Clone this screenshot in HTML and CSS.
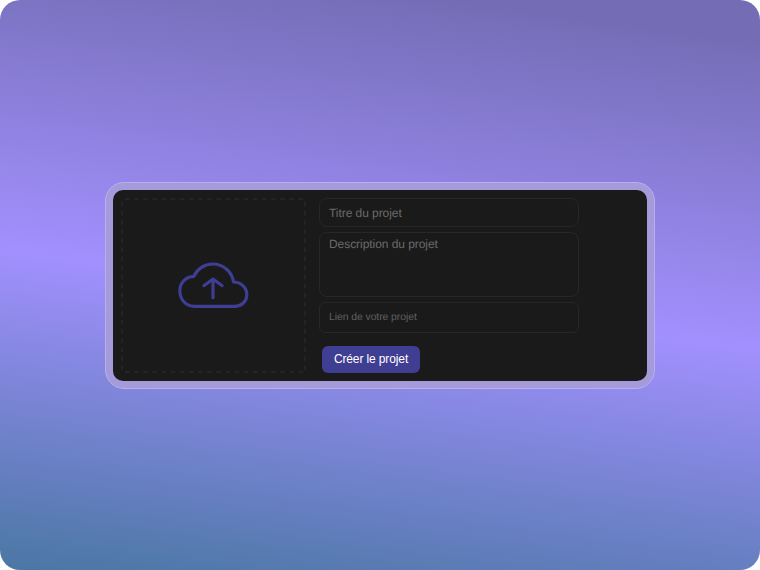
FILE: index.html
```html
<!DOCTYPE html>
<html lang="fr">
<head>
<meta charset="utf-8">
<title>Créer un projet</title>
<link rel="stylesheet" href="styles.css">
</head>
<body>
<main class="stage">
  <div class="frame">
    <form class="card">
      <div class="dropzone">
        <svg class="outline" width="185" height="175" viewBox="0 0 185 175" aria-hidden="true">
          <path d="M4 1H183M4 174H183" stroke-dasharray="4.6 4.53"/>
          <path d="M1 4V173M184 4V173" stroke-dasharray="4.6 4.48"/>
        </svg>
        <svg class="cloud" width="90" height="60" viewBox="0 0 270 180" aria-hidden="true">
          <path d="M74 154C49 154 31 133 31 108C31 83 49 65 73 64C83 42 105 27 130 27C162 27 188 51 192 81C214 81 232 98 232 119C232 139 216 154 196 154Z"/>
          <path d="M130.500 128V72M103 92L130.500 72L158 92"/>
        </svg>
      </div>
      <div class="fields">
        <div class="field title">Titre du projet</div>
        <div class="field description">Description du projet</div>
        <div class="field link">Lien de votre projet</div>
        <button class="submit" type="button">Créer le projet</button>
      </div>
    </form>
  </div>
</main>
</body>
</html>
```
FILE: styles.css
```css
* { box-sizing: border-box; }
body {
  margin: 0;
  background: #fff;
  font-family: "Liberation Sans", sans-serif;
  text-rendering: geometricPrecision;
}
.stage {
  width: 760px;
  height: 570px;
  display: flex;
  align-items: center;
  justify-content: center;
  border-radius: 20px;
  background: linear-gradient(187.5deg, #746db5 6%, #a290fe 52%, #4676a0 102%);
}
.frame {
  width: 550px;
  height: 207px;
  margin-top: 1px;
  padding: 7px;
  border: 1px solid #b9aff0;
  border-radius: 19px;
  background: #a59bda;
}
.card {
  height: 191px;
  margin: 0;
  padding: 8px;
  display: flex;
  gap: 13px;
  border-radius: 10px;
  background: #1a1a1a;
}
.dropzone {
  position: relative;
  width: 185px;
  height: 175px;
  display: flex;
  align-items: center;
  justify-content: center;
}
.outline {
  position: absolute;
  inset: 0;
  fill: none;
  stroke: #282828;
  stroke-width: 1.5;
}
.cloud {
  margin: -1px 0 0 1px;
  transform: translate(0.5px, 0);
  fill: none;
  stroke: #3f3d94;
  stroke-width: 9.5;
  stroke-linecap: round;
  stroke-linejoin: round;
}
.fields {
  width: 260px;
  display: flex;
  flex-direction: column;
  align-items: flex-start;
}
.field {
  width: 100%;
  padding-left: 9px;
  display: flex;
  align-items: center;
  border: 1px solid #272727;
  border-radius: 8px;
  color: #6a6a6a;
  font-size: 12px;
  line-height: 16px;
  letter-spacing: -0.06px;
  white-space: nowrap;
}
.title { height: 29px; }
.description {
  height: 65px;
  margin-top: 5px;
  padding-top: 3px;
  align-items: flex-start;
}
.link {
  height: 31px;
  margin-top: 5px;
  border-radius: 6px;
  color: #606060;
  font-size: 10.4px;
}
.submit {
  width: 98px;
  height: 27px;
  margin: 13px 0 0 3px;
  padding: 0 0 2px;
  border: 0;
  border-radius: 6px;
  background: #403e93;
  color: #fff;
  font: 12px/16px "Liberation Sans", sans-serif;
  letter-spacing: -0.12px;
  white-space: nowrap;
}
```
